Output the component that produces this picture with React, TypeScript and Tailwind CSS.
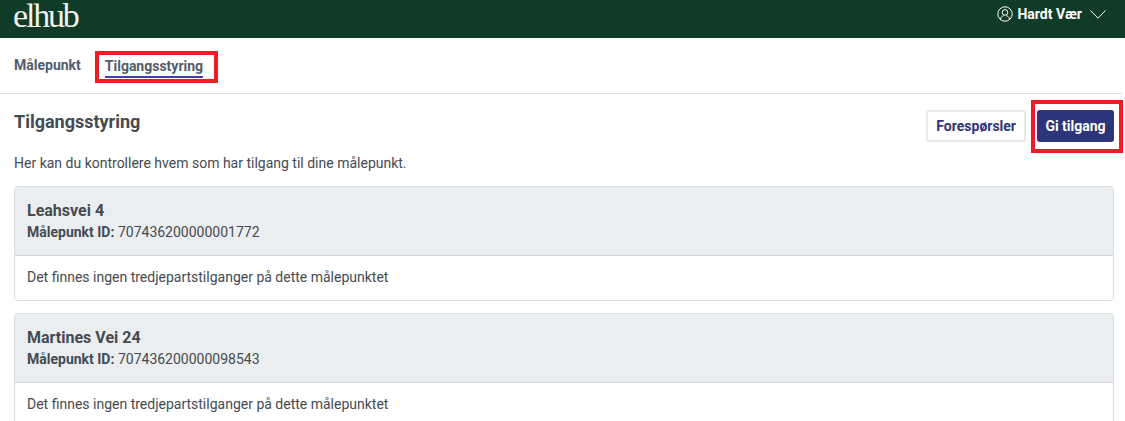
function UserIcon() {
  return (
    <svg width="16" height="16" viewBox="0 0 16 16" fill="none" stroke="currentColor" strokeWidth="1">
      <circle cx="8" cy="8" r="7.2" />
      <circle cx="8" cy="6.4" r="2.8" />
      <path d="M3.4 13c.6-2 2-3 3.2-3.3M12.6 13c-.6-2-2-3-3.2-3.3" />
    </svg>
  );
}

function MeterCard({ name, id }: { name: string; id: string }) {
  return (
    <div className="border border-[#dcdfe2] rounded-[4px] overflow-hidden bg-white">
      <div className="bg-[#ebeef0] border-b border-[#d2d4d7] h-[69px] px-3 pt-[14px]">
        <h2 className="text-[16px] leading-[20px] font-bold text-[#454a52]">{name}</h2>
        <p className="text-[14px] leading-[20px] mt-[1px] text-[#454a52]">
          <span className="font-bold">Målepunkt ID:</span> {id}
        </p>
      </div>
      <div className="h-[44px] px-3 pt-[11px] text-[14px] leading-[20px] text-[#454a52]">
        Det finnes ingen tredjepartstilganger på dette målepunktet
      </div>
    </div>
  );
}

export default function App() {
  return (
    <div className="h-[421px] overflow-hidden bg-white font-['Roboto',sans-serif]">
      {/* Top bar */}
      <header className="h-[38px] bg-[#0f3b27] flex items-start justify-between pl-[13px] pr-[19px] text-white">
        <span className="font-['Liberation_Serif',serif] text-[34px] leading-[32px] tracking-[-2.2px] text-[#f2f2ec]">
          elhub
        </span>
        <div className="flex items-center mt-[5px]">
          <UserIcon />
          <span className="ml-[4px] text-[14px] leading-[18px] font-bold">Hardt Vær</span>
          <svg width="16" height="9" viewBox="0 0 16 9" fill="none" stroke="currentColor" strokeWidth="1" className="ml-[8px]">
            <path d="M0.5 0.5L8 8.2L15.5 0.5" />
          </svg>
        </div>
      </header>

      {/* Tabs */}
      <nav className="h-[56px] border-b border-[#dedfe0] mr-[3px] flex items-start pl-[14px] pt-[13px]">
        <span className="text-[14px] leading-[28px] font-bold text-[#535c6c]">Målepunkt</span>
        <div className="ml-[14px] h-[32px] w-[123px] border-4 border-[#ee1c25] pl-[6px]">
          <span className="block w-fit text-[14px] leading-[20px] pt-[1px] font-bold text-[#535c6c] border-b-2 border-[#3a47a8]">
            Tilgangsstyring
          </span>
        </div>
      </nav>

      <main className="px-[14px]">
        <div className="flex items-start justify-between">
          <h1 className="mt-[16px] text-[18px] leading-[24px] font-bold text-[#454a52]">Tilgangsstyring</h1>
          <div className="flex items-start mt-[6px] -mr-[12px]">
            <button className="mt-[10px] h-[32px] px-[8px] rounded-[3px] border-2 border-[#e6e9ec] bg-white text-[14px] font-bold text-[#2c3579]">
              Forespørsler
            </button>
            <div className="ml-[5px] border-4 border-[#ee1c25] pt-[6px] pl-[2px] w-[92px] h-[53px]">
              <button className="block h-[32px] w-[77px] rounded-[3px] bg-[#2c3579] text-[14px] font-bold text-white">
                Gi tilgang
              </button>
            </div>
          </div>
        </div>

        <p className="text-[14px] leading-[20px] text-[#454a52]">
          Her kan du kontrollere hvem som har tilgang til dine målepunkt.
        </p>

        <div className="mt-[13px] mr-[-3px] flex flex-col gap-3">
          <MeterCard name="Leahsvei 4" id="707436200000001772" />
          <MeterCard name="Martines Vei 24" id="707436200000098543" />
        </div>
      </main>
    </div>
  );
}
